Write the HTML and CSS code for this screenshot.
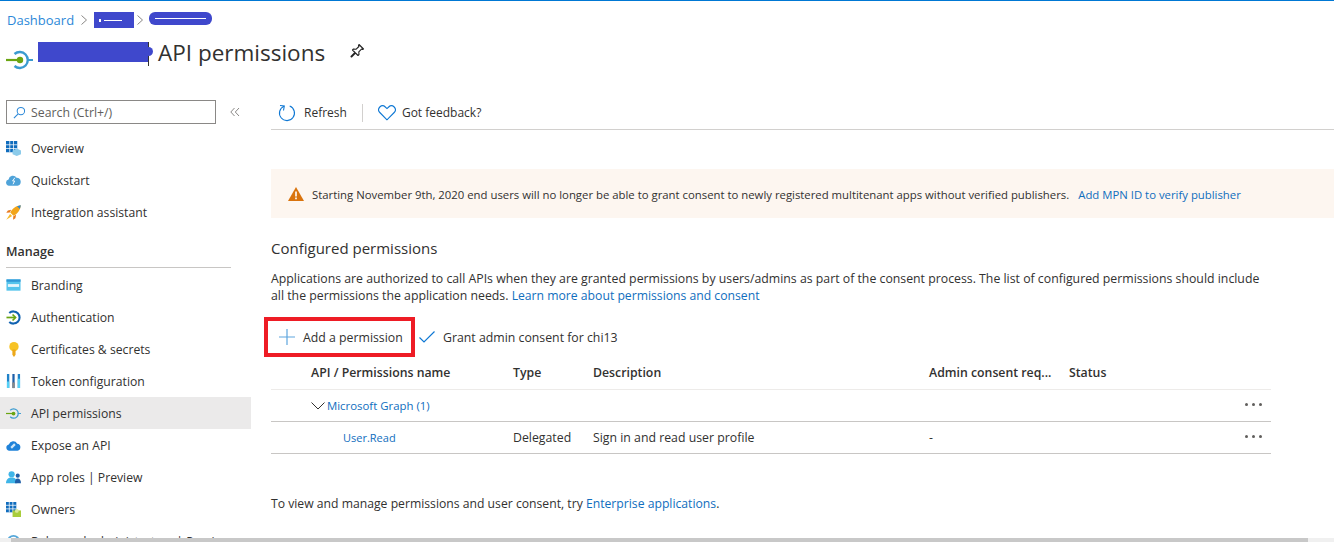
FILE: index.html
```html
<!DOCTYPE html>
<html lang="en">
<head>
    <meta charset="UTF-8">
    <title>API permissions</title>
    <link rel="stylesheet" href="styles.css">
</head>
<body>
<div class="breadcrumb">
    <a href="#">Dashboard</a>
    <svg class="crumb-sep" viewBox="0 0 8 12"><path d="M1.500 1.500 6.500 6l-5 4.500" fill="none" stroke="#8a8886"/></svg>
    <span class="scribble scribble-one"><i></i><i></i></span>
    <svg class="crumb-sep crumb-sep-tight" viewBox="0 0 8 12"><path d="M1.500 1.500 6.500 6l-5 4.500" fill="none" stroke="#8a8886"/></svg>
    <span class="scribble scribble-two"><i></i></span>
</div>

<div class="title-row">
    <svg class="title-icon" viewBox="0 0 28 20">
        <path d="M21 10h6" stroke="#3a9bd0" stroke-width="2"/>
        <path d="M8.500 4a8 8 0 1 1 0 12" fill="none" stroke="#3a9bd0" stroke-width="2.400"/>
        <path d="M0 10h14" stroke="#6aa512" stroke-width="2.200"/>
        <circle cx="14" cy="10" r="3.200" fill="#6aa512"/>
    </svg>
    <span class="title-scribble"></span>
    <span class="title-caret"></span>
    <h1>API permissions</h1>
    <svg class="pin" viewBox="0 0 16 16"><path d="M10 1.500 14.500 6l-1 .5-1-.4-2.700 2.700.2 2.700-1 1-2.500-2.500-4 4-.5-.5 4-4L3.500 7l1-1 2.700.2L9.900 3.500l-.4-1z" fill="none" stroke="#222" stroke-width="1.100" stroke-linejoin="round"/></svg>
</div>

<div class="layout">
    <aside class="sidebar">
        <div class="search-row">
            <div class="search">
                <svg class="search-icon" viewBox="0 0 14 14"><circle cx="8.500" cy="5.500" r="4" fill="none" stroke="#2b88d8" stroke-width="1.100"/><path d="M5.500 8.500 1 13" stroke="#2b88d8" stroke-width="1.200"/></svg>
                <span>Search (Ctrl+/)</span>
            </div>
            <svg class="collapse" viewBox="0 0 10 10"><path d="M4.500 1 .8 5l3.700 4M9 1 5.300 5 9 9" fill="none" stroke="#8a8886"/></svg>
        </div>

        <nav class="nav">
            <a class="nav-item" href="#">
                <svg viewBox="0 0 16 16"><path d="M0 0h12v12H0z" fill="#0f6cbd"/><path d="M4 0v12M8 0v12M0 4h12M0 8h12" stroke="#fff" stroke-width=".8"/><path d="M11.500 8l4.500 2v4l-4.500 2L7 14v-4z" fill="#8ccbea"/></svg>
                Overview
            </a>
            <a class="nav-item" href="#">
                <svg viewBox="0 0 16 16"><path d="M3.200 13.500a3.400 3.400 0 0 1-.5-6.700A4.700 4.700 0 0 1 11.300 5a4.300 4.300 0 0 1 1 8.500z" fill="#4fa3d9"/><path d="M9.500 5 7 8.500h2.200L7.500 12" fill="none" stroke="#fff"/></svg>
                Quickstart
            </a>
            <a class="nav-item" href="#">
                <svg viewBox="0 0 16 16"><path d="M15.800 .2C11 .6 6.800 3.500 4.500 8l3.500 3.500c4.500-2.300 7.400-6.500 7.800-11.300z" fill="#f2a51a"/><path d="M15.800 .2 11.800 1.200 14.800 4.200z" fill="#2b88d8"/><path d="M5.500 5 2 5.800 .3 8.300l3.700-.3zM10.800 10.500 10 14l-2.500 1.700.3-3.700z" fill="#e8791d"/><path d="M4.300 9.500 .3 15.700 6.500 11.700z" fill="#f7b928"/></svg>
                Integration assistant
            </a>

            <div class="nav-section">Manage</div>

            <a class="nav-item" href="#">
                <svg viewBox="0 0 16 16"><path d="M.5 1.500h15v12H.5z" fill="#55c4ec"/><path d="M.5 1.500h15v2.500H.5z" fill="#2f97d6"/><path d="M2 6.500h12v3H2z" fill="#e6f6fc"/></svg>
                Branding
            </a>
            <a class="nav-item" href="#">
                <svg viewBox="0 0 16 16"><path d="M3.500 3.300a6.500 6.500 0 1 1 0 9.400" fill="none" stroke="#1062b0" stroke-width="2.200"/><path d="M.5 8h9.500" stroke="#6aa512" stroke-width="1.800"/><path d="M7 4.800 10.200 8 7 11.200" fill="none" stroke="#6aa512" stroke-width="1.800"/></svg>
                Authentication
            </a>
            <a class="nav-item" href="#">
                <svg viewBox="0 0 16 16"><circle cx="8.500" cy="5" r="5" fill="#f7c325"/><path d="M6.800 8h3.400v5.500L8.500 16l-1.700-2.500z" fill="#eca81a"/></svg>
                Certificates &amp; secrets
            </a>
            <a class="nav-item" href="#">
                <svg viewBox="0 0 16 16"><path d="M1 0h2.500v15H1zM12.500 0H15v15h-2.500z" fill="#1f82c9"/><path d="M1 8h2.500v7H1zM12.500 5H15v10h-2.500z" fill="#55d0f5"/><path d="M6.800 0h2.400v15H6.800z" fill="#1f5fa8"/><path d="M6.800 9h2.400v6H6.800z" fill="#8a8886"/></svg>
                Token configuration
            </a>
            <a class="nav-item nav-active" href="#">
                <svg viewBox="0 0 16 16"><path d="M12.500 8h3.500" stroke="#3a9bd0"/><path d="M4.500 4.500a5 5 0 1 1 0 7" fill="none" stroke="#3a9bd0" stroke-width="1.300"/><path d="M0 8h8" stroke="#6aa512" stroke-width="1.300"/><circle cx="8" cy="8" r="2" fill="#6aa512"/></svg>
                API permissions
            </a>
            <a class="nav-item" href="#">
                <svg viewBox="0 0 16 16"><path d="M3.500 13.500a3.400 3.400 0 0 1-.5-6.700A5 5 0 0 1 12 6a3.800 3.800 0 0 1 .3 7.500z" fill="#1f82d9"/><path d="M5.500 10.500l4-4" stroke="#cfe6f7" stroke-width="2.400"/></svg>
                Expose an API
            </a>
            <a class="nav-item" href="#">
                <svg viewBox="0 0 16 16"><circle cx="6" cy="4.500" r="3.300" fill="#3fb5e8"/><path d="M0 14c0-4 2.500-6 6-6s6 2 6 6z" fill="#3fb5e8"/><circle cx="12.500" cy="6" r="2.200" fill="#1f5fa8"/><path d="M9.500 14c0-3 1-5 3-5s3.500 2 3.500 5z" fill="#1f5fa8"/></svg>
                App roles | Preview
            </a>
            <a class="nav-item" href="#">
                <svg viewBox="0 0 16 16"><path d="M0 0h11v11H0z" fill="#0f6cbd"/><path d="M3.500 0v11M7.300 0v11M0 3.500h11M0 7.300h11" stroke="#fff" stroke-width=".8"/><path d="M7 9h9v7H7z" fill="#a9cd3c"/><circle cx="11.500" cy="9.500" r="2" fill="#d9ea9a"/></svg>
                Owners
            </a>
            <a class="nav-item" href="#">
                <svg viewBox="0 0 16 16"><circle cx="8" cy="8" r="6" fill="none" stroke="#55a7d9" stroke-width="2"/></svg>
                Roles and administrators | Preview
            </a>
        </nav>
    </aside>

    <main class="main">
        <div class="toolbar">
            <button class="tool">
                <svg class="tool-refresh" viewBox="0 0 18 18"><path d="M6 2.200a7.500 7.500 0 1 0 5.700-.1" fill="none" stroke="#0f78d4" stroke-width="1.100"/><path d="M5.500 6.500 6.300 2 2 1.500" fill="none" stroke="#0f78d4" stroke-width="1.100"/></svg>
                Refresh
            </button>
            <span class="tool-sep"></span>
            <button class="tool">
                <svg class="tool-heart" viewBox="0 0 18 16"><path d="M9 14.800 1.800 7.500a4 4 0 0 1 0-5.500 4 4 0 0 1 5.500 0L9 3.600l1.700-1.600a4 4 0 0 1 5.500 0 4 4 0 0 1 0 5.500z" fill="none" stroke="#0f78d4" stroke-width="1.100"/></svg>
                Got feedback?
            </button>
        </div>

        <div class="banner">
            <svg class="warning" viewBox="0 0 16 14"><path d="M8 0 16 14H0z" fill="#d9730d"/><path d="M7.200 4.500h1.600v5H7.200zM7.200 10.500h1.600v1.700H7.200z" fill="#fff"/></svg>
            <span>Starting November 9th, 2020 end users will no longer be able to grant consent to newly registered multitenant apps without verified publishers.</span>
            <a href="#">Add MPN ID to verify publisher</a>
        </div>

        <div class="content">
            <h2>Configured permissions</h2>
            <p class="intro">Applications are authorized to call APIs when they are granted permissions by users/admins as part of the consent process. The list of configured permissions should include all the permissions the application needs. <a href="#">Learn more about permissions and consent</a></p>

            <div class="commands">
                <button class="tool tool-add">
                    <svg viewBox="0 0 16 16"><path d="M8 0v16M0 8h16" stroke="#5ea6de" stroke-width="1.200"/></svg>
                    Add a permission
                </button>
                <button class="tool tool-grant">
                    <svg viewBox="0 0 16 12"><path d="M.5 6.500 5 11 15.500 .5" fill="none" stroke="#0f78d4" stroke-width="1.200"/></svg>
                    Grant admin consent for chi13
                </button>
            </div>

            <div class="table">
                <div class="row row-head">
                    <span class="col-name">API / Permissions name</span>
                    <span class="col-type">Type</span>
                    <span class="col-desc">Description</span>
                    <span class="col-admin">Admin consent req...</span>
                    <span class="col-status">Status</span>
                </div>
                <div class="row row-group">
                    <span class="col-name">
                        <svg class="chevron" viewBox="0 0 14 8"><path d="M.5 .5 7 7l6.500-6.500" fill="none" stroke="#323130"/></svg>
                        <a href="#">Microsoft Graph (1)</a>
                    </span>
                    <span class="more"><i></i><i></i><i></i></span>
                </div>
                <div class="row">
                    <span class="col-name col-child"><a href="#">User.Read</a></span>
                    <span class="col-type">Delegated</span>
                    <span class="col-desc">Sign in and read user profile</span>
                    <span class="col-admin">-</span>
                    <span class="more"><i></i><i></i><i></i></span>
                </div>
            </div>

            <p class="footnote">To view and manage permissions and user consent, try <a href="#">Enterprise applications</a>.</p>
        </div>
    </main>
</div>

<div class="scrollbar"><div class="scrollbar-thumb"></div></div>
</body>
</html>
```

FILE: styles.css
```css
* {
    box-sizing: border-box;
}
html, body {
    margin: 0;
    height: 542px;
    overflow: hidden;
}
body {
    position: relative;
    border-top: 1px solid #0078d4;
    font-family: 'Open Sans', 'Noto Sans', sans-serif;
    font-size: 12.3px;
    color: #323130;
    background: #fff;
}
a {
    color: #106ebe;
    text-decoration: none;
}
button {
    font: inherit;
    color: inherit;
    background: none;
    border: none;
    padding: 0;
}

.breadcrumb {
    display: flex;
    align-items: center;
    height: 20px;
    margin-top: 9px;
    padding-left: 7px;
    font-size: 13px;
}
.breadcrumb a {
    color: #2b88d8;
}
.crumb-sep {
    width: 8px;
    height: 12px;
    margin: 0 6px 0 6px;
}
.crumb-sep-tight {
    margin: 0 5px 0 2px;
}
.scribble {
    display: flex;
    align-items: center;
    gap: 3px;
    background: #3f48cc;
}
.scribble i {
    display: block;
    height: 1px;
    background: #fff;
}
.scribble-one {
    width: 40px;
    height: 16px;
    padding-left: 5px;
}
.scribble-one i:first-child {
    width: 2px;
    height: 3px;
}
.scribble-one i:last-child {
    width: 18px;
}
.scribble-two {
    width: 63px;
    height: 13px;
    margin-top: -4px;
    padding: 0 6px;
    border-radius: 6px;
}
.scribble-two i {
    width: 100%;
}

.title-row {
    display: flex;
    align-items: center;
    height: 40px;
    margin-top: 2px;
    padding-left: 6px;
}
.title-icon {
    width: 28px;
    height: 20px;
    margin: 16px 4px 0 0;
}
.title-scribble {
    position: relative;
    width: 110px;
    height: 20px;
    background: #3f48cc;
}
.title-scribble::after {
    content: "";
    position: absolute;
    right: -5px;
    top: 5px;
    width: 9px;
    height: 9px;
    border-radius: 50%;
    background: #3f48cc;
}
.title-caret {
    width: 1px;
    height: 24px;
    margin-top: 3px;
    background: #323130;
}
h1 {
    margin: 0 0 0 9px;
    font-size: 22.5px;
    font-weight: 400;
}
.pin {
    width: 16px;
    height: 16px;
    margin: -2px 0 0 24px;
}

.layout {
    display: flex;
    margin-top: 28px;
}
.sidebar {
    width: 251px;
    flex: none;
}
.search-row {
    display: flex;
    align-items: center;
    padding-left: 6px;
    height: 24px;
}
.search {
    display: flex;
    align-items: center;
    gap: 5px;
    width: 210px;
    height: 24px;
    padding-left: 6px;
    border: 1px solid #8a8886;
    color: #605e5c;
}
.search-icon {
    width: 13px;
    height: 13px;
}
.collapse {
    width: 10px;
    height: 10px;
    margin-left: 14px;
}
.nav {
    margin-top: 8px;
}
.nav-item {
    display: flex;
    align-items: center;
    gap: 10px;
    height: 32px;
    padding-left: 6px;
    color: #323130;
    font-size: 12.2px;
}
.nav-item svg {
    width: 15px;
    height: 15px;
    flex: none;
}
.nav-active {
    background: #ebeaea;
}
.nav-section {
    height: 33px;
    margin: 7px 20px 0 6px;
    padding-top: 8px;
    border-bottom: 1px solid #c8c6c4;
    font-size: 12.5px;
    font-weight: 600;
    line-height: 18px;
}
.nav-section + .nav-item {
    margin-top: 1px;
}

.main {
    flex: 1;
    padding-left: 20px;
}
.toolbar {
    display: flex;
    align-items: center;
    height: 30px;
    padding: 0 0 4px 7px;
    border-bottom: 1px solid #d2d0ce;
    font-size: 12px;
}
.tool {
    display: flex;
    align-items: center;
}
.tool-refresh {
    width: 18px;
    height: 18px;
    margin-right: 8px;
}
.tool-heart {
    width: 18px;
    height: 16px;
    margin-right: 6px;
}
.tool-sep {
    width: 1px;
    height: 18px;
    margin: 0 15px;
    background: #d2d0ce;
}
.banner {
    display: flex;
    align-items: center;
    height: 49px;
    margin-top: 39px;
    padding: 1px 0 0 17px;
    background: #fdf6f0;
    font-size: 11.35px;
}
.warning {
    width: 16px;
    height: 14px;
    margin-right: 8px;
}
.banner a {
    margin-left: 9px;
}
.content {
    width: 1000px;
}
h2 {
    margin: 20px 0 0;
    font-size: 15px;
    font-weight: 400;
    line-height: 20px;
}
.intro {
    margin: 12px 0 0;
    line-height: 17px;
}
.intro a {
    font-size: 12.2px;
}
.commands {
    display: flex;
    align-items: center;
    height: 40px;
    margin: 13px 0 0 -7px;
}
.tool-add {
    gap: 8px;
    width: 151px;
    height: 40px;
    padding-left: 11px;
    border: 4px solid #ee1c25;
}
.tool-add svg {
    width: 16px;
    height: 16px;
}
.tool-grant {
    gap: 8px;
    margin-left: 4px;
}
.tool-grant svg {
    width: 16px;
    height: 12px;
}
.table {
    margin-top: -1px;
}
.row {
    display: flex;
    align-items: center;
    height: 32px;
    border-bottom: 1px solid #c8c6c4;
}
.row-head {
    height: 34px;
    border-bottom-color: #edebe9;
    font-weight: 600;
}
.col-name {
    display: flex;
    align-items: center;
    width: 242px;
    padding-left: 40px;
}
.col-name a {
    font-size: 11.4px;
}
.row-group .col-name {
    width: auto;
}
.col-child {
    padding-left: 72px;
}
.col-child a {
    font-size: 11px;
}
.chevron {
    width: 14px;
    height: 8px;
    margin-right: 2px;
}
.col-type {
    width: 80px;
}
.col-desc {
    width: 336px;
}
.col-admin {
    width: 140px;
}
.more {
    display: flex;
    gap: 4px;
    margin: 0 9px 2px auto;
}
.more i {
    width: 3px;
    height: 3px;
    border-radius: 50%;
    background: #605e5c;
}
.footnote {
    margin: 41px 0 0;
    font-size: 12.2px;
}

.scrollbar {
    position: absolute;
    left: 0;
    right: 0;
    bottom: 0;
    height: 4px;
    background: #f0f0f0;
}
.scrollbar-thumb {
    height: 4px;
    margin-left: 11px;
    width: 1297px;
    background: #c8c8c8;
}
```
